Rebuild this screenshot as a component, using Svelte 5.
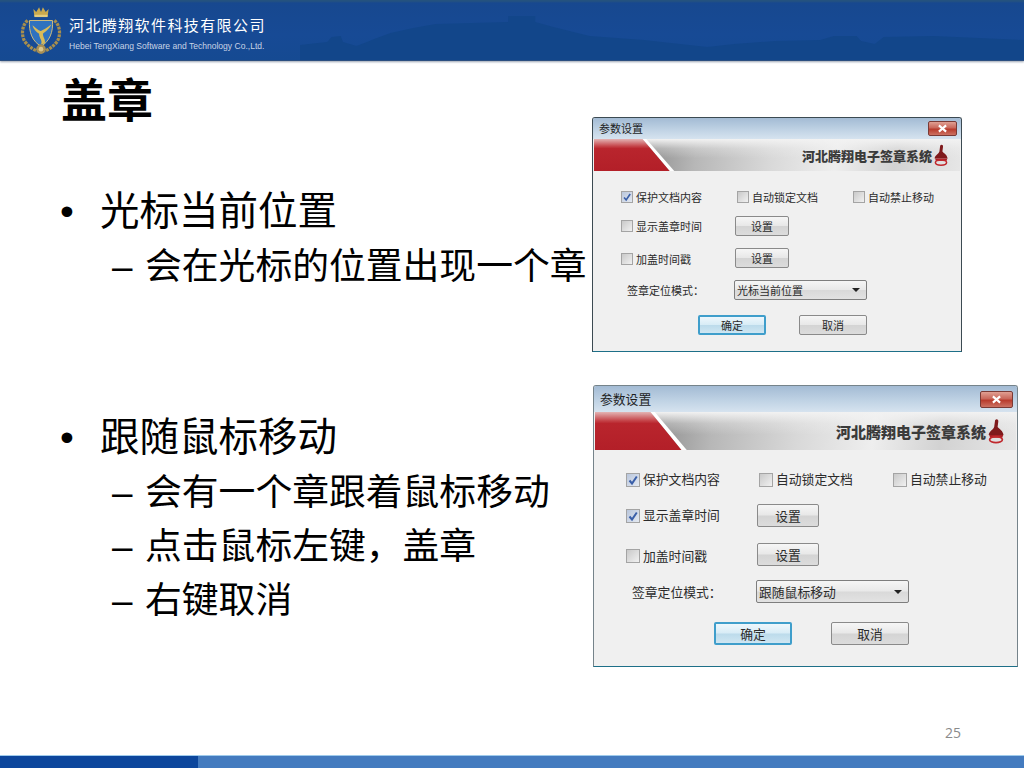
<script>
  const topRow = ['保护文档内容', '自动锁定文档', '自动禁止移动'];
  const dialogs = [
    { cls: 'd1', mode: '光标当前位置', showTime: false },
    { cls: 'd2', mode: '跟随鼠标移动', showTime: true }
  ];
  const sections = [
    { cls: 'first', head: '光标当前位置', subs: ['会在光标的位置出现一个章'] },
    { cls: 'second', head: '跟随鼠标移动', subs: ['会有一个章跟着鼠标移动', '点击鼠标左键，盖章', '右键取消'] }
  ];
</script>

{#snippet check(on, label)}
  <span class="chk-wrap">
    <span class="chk" class:on>
      {#if on}
        <svg viewBox="0 0 12 12"><path d="M2.5 6.5 5 9.5 9.8 2.5" fill="none" stroke="#3a5fa8" stroke-width="2" /></svg>
      {/if}
    </span>
    <span class="lbl">{label}</span>
  </span>
{/snippet}

{#snippet dialog(d)}
  <section class="win {d.cls}">
    <header class="titlebar">
      <span class="wtitle">参数设置</span>
      <span class="close">
        <svg viewBox="0 0 12 10"><path d="M2 1.5 10 8.5M10 1.5 2 8.5" stroke="#fff" stroke-width="2.4" /></svg>
      </span>
    </header>
    <div class="banner">
      <svg class="red" viewBox="0 0 90 32" preserveAspectRatio="none">
        <defs>
          <linearGradient id="rg-{d.cls}" x1="0" y1="0" x2="0" y2="1">
            <stop offset="0" stop-color="#e3b4b4" />
            <stop offset=".22" stop-color="#c6474c" />
            <stop offset=".3" stop-color="#b9252d" />
            <stop offset="1" stop-color="#b31f28" />
          </linearGradient>
        </defs>
        <polygon points="52,0 56,0 86,32 81,32" fill="#fff" />
        <polygon points="0,0 52,0 81,32 0,32" fill="url(#rg-{d.cls})" />
      </svg>
      <span class="brand">河北腾翔电子签章系统</span>
      <svg class="stamp" viewBox="0 0 14 22">
        <path d="M6.2 1.5C7.6 0 9.4 1 9 3L8.4 7.5C10 9.5 13 10.5 13.6 14.5H.6C1 11 4.5 10 5.4 7.5Z" fill="#7f1a1c" />
        <path d="M1 14.5H13.4L12.4 17H2Z" fill="#a82025" />
        <ellipse cx="7" cy="18.6" rx="5.6" ry="2.6" fill="none" stroke="#c0282d" stroke-width="1.5" />
      </svg>
    </div>
    <div class="body">
      <div class="row r1">
        {@render check(true, topRow[0])}
        {@render check(false, topRow[1])}
        {@render check(false, topRow[2])}
      </div>
      <div class="row r2">
        {@render check(d.showTime, '显示盖章时间')}
        <span class="btn set">设置</span>
      </div>
      <div class="row r3">
        <span class="low">{@render check(false, '加盖时间戳')}</span>
        <span class="btn set">设置</span>
      </div>
      <div class="row r4">
        <span class="mode-label">签章定位模式：</span>
        <span class="select"><span>{d.mode}</span><i class="caret"></i></span>
      </div>
      <div class="actions">
        <span class="btn act primary">确定</span>
        <span class="btn act">取消</span>
      </div>
    </div>
  </section>
{/snippet}

<div class="slide">
  <header class="top">
    <svg class="skyline" viewBox="0 0 1024 60" preserveAspectRatio="none">
      <path d="M0 60V45L60 42 70 37 90 36 95 42 125 46 170 38 200 33 250 28 300 24 460 22V16H520V22L560 27 640 36 760 40 840 44 900 47 960 44 1050 41 1150 40 1180 36V36L1230 36 1240 41 1270 44 1290 37 1400 36 1600 40V60Z" transform="translate(300 0) scale(.4525 1)" fill="#12468a" />
    </svg>
    <svg class="logo" viewBox="0 0 44 52">
      <path d="M14 3 17 6 20 1 22 6 24 1 27 6 30 3 29 10H15Z" fill="#c9a94e" />
      <rect x="15" y="9" width="14" height="2.4" fill="#e4cc7d" />
      <path d="M8 15C2 20 1 30 5 37 9 42 13 45 18 47" fill="none" stroke="#a98f4c" stroke-width="3.4" stroke-dasharray="3 1" />
      <path d="M36 15C42 20 43 30 39 37 35 42 31 45 26 47" fill="none" stroke="#a98f4c" stroke-width="3.4" stroke-dasharray="3 1" />
      <path d="M10 15H34C35 27 31 37 22 42 13 37 9 27 10 15Z" fill="#2f72bf" stroke="#d7c07a" stroke-width="1" />
      <path d="M13 20C18 24 20 26 22 26 24 25 28 23 33 19 30 25 26 27 24 29 24 33 27 35 26 39L22 40C24 36 20 34 20 29 17 27 14 24 13 20Z" fill="#d9bb58" />
      <circle cx="22" cy="45" r="5" fill="#a88f55" />
      <circle cx="22" cy="45" r="2.4" fill="#d8c68f" />
    </svg>
    <div class="brandline">
      <div class="cn">河北腾翔软件科技有限公司</div>
      <div class="en">Hebei TengXiang Software and Technology Co.,Ltd.</div>
    </div>
  </header>

  <main class="main">
    <h1>盖章</h1>
    {#each sections as s}
      <div class="sec {s.cls}">
        <div class="l1"><span class="dot">•</span>{s.head}</div>
        {#each s.subs as t}
          <div class="l2"><span class="dash">–</span>{t}</div>
        {/each}
      </div>
    {/each}
    {#each dialogs as d}
      {@render dialog(d)}
    {/each}
  </main>

  <div class="pageno">25</div>
  <footer class="bar"><span class="bar-a"></span></footer>
</div>

<style>
  :global(body) { margin: 0; background: #fff; }
  .slide {
    width: 1024px; height: 768px; position: relative; overflow: hidden;
    display: flex; flex-direction: column; background: #fff;
    font-family: "Noto Sans CJK SC", "Noto Sans", sans-serif; color: #000;
  }
  .top {
    height: 60px; flex: none; position: relative; display: flex; align-items: center;
    padding-left: 20px; box-sizing: border-box;
    background: linear-gradient(#24527f 0, #24527f 1px, #17488f 3px, #174a95 35px, #154a92 100%);
    box-shadow: 0 1px 0 #2c4f80, 0 2px 2px #9aa3b0;
  }
  .skyline { position: absolute; inset: 0; width: 100%; height: 100%; }
  .logo { width: 42px; height: 50px; position: relative; flex: none; margin-top: 2px; }
  .brandline { position: relative; margin-left: 7px; color: #fff; }
  .cn { font-size: 15px; letter-spacing: 1.4px; line-height: 20px; margin-top: 6px; white-space: nowrap; }
  .en { font: 8.55px/12px "Liberation Sans", sans-serif; color: #c8d4e6; margin-top: 5px; white-space: nowrap; }

  .main { flex: 1; padding-left: 60px; position: relative; }
  h1 { margin: 8px 0 0 1px; font-size: 46px; line-height: 58px; font-weight: 700; letter-spacing: 0; }
  .sec.first { margin-top: 55px; }
  .sec.second { margin-top: 117px; }
  .l1 { font-size: 39.5px; height: 55px; line-height: 54px; white-space: nowrap; }
  .l2 { font-size: 36.8px; padding-left: 52px; height: 54px; line-height: 54px; white-space: nowrap; }
  .dot { display: inline-block; width: 40px; font-family: "Liberation Sans", sans-serif; }
  .dash { display: inline-block; width: 33px; font-family: "Liberation Sans", sans-serif; }

  .win {
    position: absolute; box-sizing: border-box; background: #f0f0f0;
    border: 1px solid #3c4a52; border-radius: 3px 3px 0 0;
    display: flex; flex-direction: column; color: #2b2b2b; overflow: hidden;
    font-size: var(--fs); border-bottom-color: #1d6f88;
  }
  .d1 {
    left: 592px; top: 57px; width: 370px; height: 235px; --fs: 11px; --tb: 21px; --bn: 32px;
    --pl: 28px; --c2: 116px; --c3: 116px; --h: 20px; --chk: 12px; --lg: 3px;
    --g1: 16px; --g2: 9px; --g3: 12px; --g4: 12px; --g5: 15px;
    --btnw: 54px; --selw: 133px; --btn2: 68px; --bl: 104px; --bg: 33px; --ml: 34px; --sel: 107px; --cx: 29px; --cy: 15px; --brand: 13px; --redw: 84px; --bt: 29px; --stw: 14px; --low: 4px;
  }
  .d2 {
    left: 593px; top: 325px; width: 425px; height: 282px; --fs: 12.8px; --tb: 26px; --bn: 38px;
    --pl: 32px; --c2: 133px; --c3: 134px; --h: 23px; --chk: 14px; --lg: 3px;
    --g1: 18px; --g2: 13px; --g3: 15px; --g4: 15px; --g5: 19px;
    --btnw: 62px; --selw: 153px; --btn2: 78px; --bl: 119px; --bg: 39px; --ml: 39px; --sel: 124px; --cx: 33px; --cy: 17px; --brand: 15px; --redw: 96px; --bt: 35px; --stw: 16px; --low: 6px;
    border-color: #75838a; border-bottom-color: #1d6f88;
  }
  .titlebar {
    height: var(--tb); flex: none; display: flex; align-items: center; justify-content: space-between;
    padding: 0 4px 0 6px; box-sizing: border-box;
    background: linear-gradient(#a3bbd4, #bfd2e4 55%, #d6e3ef);
  }
  .wtitle { color: #1f1f1f; margin-top: -2px; }
  .close {
    width: var(--cx); height: var(--cy); flex: none; border: 1px solid #7a3a35; border-radius: 2px; box-sizing: border-box;
    background: linear-gradient(#e0a093, #c9675a 45%, #b83b2c 55%, #cc7263);
    display: flex; align-items: center; justify-content: center;
  }
  .close svg { width: 11px; height: 9px; }
  .banner {
    height: var(--bn); flex: none; position: relative; display: flex; align-items: center; justify-content: flex-end;
    padding-right: 12px; box-sizing: border-box; margin: 0 1px;
    background:
      linear-gradient(#f2f2f2 0, rgba(242,242,242,.3) 30%, rgba(255,255,255,0) 60%),
      linear-gradient(97deg, #8e8e8e 14%, #b7b7b7 28%, #d8d8d8 48%, #eeeeee 66%, #d2d2d2 82%, #e6e6e6 100%);
  }
  .red { position: absolute; left: 0; top: 0; height: 100%; width: var(--redw); }
  .brand { position: relative; font-size: var(--brand); font-weight: 900; color: #3b3b3b; white-space: nowrap; letter-spacing: 0; }
  .stamp { position: relative; width: var(--stw); height: 100%; flex: none; margin-left: 2px; }

  .body { padding: var(--g1) 0 0 var(--pl); }
  .row {
    display: grid; grid-template-columns: var(--c2) var(--c3) auto; height: var(--h); align-items: center; white-space: nowrap;
  }
  .r2 { margin-top: var(--g2); }
  .r3 { margin-top: var(--g3); }
  .r4 { margin-top: var(--g4); grid-template-columns: var(--sel) auto; padding-left: 6px; margin-left: 0; }
  .chk-wrap { display: inline-flex; align-items: center; gap: var(--lg); }
  .chk {
    width: var(--chk); height: var(--chk); box-sizing: border-box; flex: none; border: 1px solid #a4a4a4;
    background: linear-gradient(135deg, #c9c9c9, #f1f1f1); display: inline-flex; align-items: center; justify-content: center;
  }
  .chk.on { background: linear-gradient(135deg, #b9c6dc, #e4e9f1); }
  .chk svg { width: 100%; height: 100%; }
  .lbl { line-height: 1; }
  .low { display: block; padding-top: var(--low); }
  .btn {
    display: inline-flex; align-items: center; justify-content: center; box-sizing: border-box;
    height: var(--h); border: 1px solid #8a8a8a; border-radius: 2px;
    background: linear-gradient(#f6f6f6, #e8e8e8 48%, #d4d4d4 52%, #dcdcdc);
  }
  .set { width: var(--btnw); margin-left: -2px; }
  .select {
    width: var(--selw); height: var(--h); box-sizing: border-box; display: flex; align-items: center; justify-content: space-between;
    padding: 0 6px 0 2px; border: 1px solid #7e7e7e; border-radius: 2px;
    background: linear-gradient(#f6f6f6, #e9e9e9 48%, #d9d9d9 52%, #e2e2e2);
  }
  .caret { width: 0; height: 0; border: 4px solid transparent; border-top: 4px solid #222; border-bottom: 0; }
  .actions { display: flex; gap: var(--bg); margin: var(--g5) 0 0 calc(var(--bl) - var(--pl) + 1px); }
  .act { width: var(--btn2); }
  .primary { border: 2px solid #3f9ecb; background: linear-gradient(#eef7fc, #d8ecf6 48%, #bcdbeb 52%, #cfe6f2); }

  .pageno { position: absolute; left: 945px; top: 724px; font: 14px/18px "Open Sans", sans-serif; color: #8a8a8a; }
  .bar { height: 12px; flex: none; background: #447bbf; box-shadow: 0 -1px 0 #9fcbec; display: flex; }
  .bar-a { width: 198px; background: #0c469c; }
</style>
